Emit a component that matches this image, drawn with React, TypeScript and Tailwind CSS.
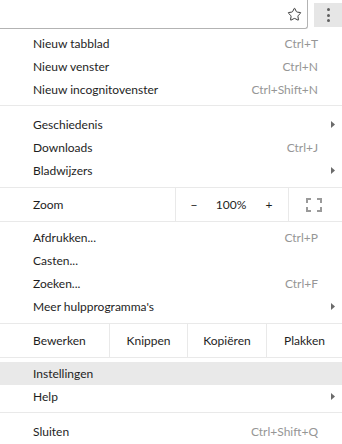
import { Star } from 'lucide-react';

type ItemProps = { label: string; shortcut?: string; arrow?: boolean; active?: boolean };

function Arrow() {
    return (
        <svg width="4" height="7" viewBox="0 0 4 7" className="block">
            <polygon points="0,0 4,3.5 0,7" fill="#6b6b6b" />
        </svg>
    );
}

function Item({ label, shortcut, arrow, active }: ItemProps) {
    return (
        <div className={`flex items-center h-[23px] pl-[33px] ${arrow ? 'pr-[7px]' : 'pr-[24px]'} ${active ? 'bg-[#e9e9e9]' : ''}`}>
            <span className="flex-1">{label}</span>
            {shortcut && <span className="text-[#969696]">{shortcut}</span>}
            {arrow && <Arrow />}
        </div>
    );
}

function Separator() {
    return <div className="h-px bg-[#e9e9e9]" />;
}

function FullscreenIcon() {
    return (
        <svg width="16" height="14" viewBox="0 0 16 14" fill="none" stroke="#9a9a9a" strokeWidth="2">
            <path d="M1 5V1h4M11 1h4v4M15 9v4h-4M5 13H1V9" />
        </svg>
    );
}

export default function App() {
    return (
        <div className="w-[342px] h-[444px] bg-white overflow-hidden text-[12px] text-[#1e1e1e] font-['Lato','Noto_Sans',sans-serif]">
            {/* toolbar */}
            <div className="flex h-[29px]">
                <div className="w-[308px] h-[29px] border-r border-b border-[#b3b3b3] rounded-br-[3px] flex items-center justify-end pr-[5px]">
                    <Star className="w-[15px] h-[15px] text-[#3c3c3c]" strokeWidth={1.6} />
                </div>
                <div className="ml-[6px] mt-[3px] w-[28px] h-[24px] bg-[#e6e6e6] flex flex-col items-center justify-center gap-[2.5px]">
                    <span className="w-[3px] h-[3px] rounded-full bg-[#5f5f5f]" />
                    <span className="w-[3px] h-[3px] rounded-full bg-[#5f5f5f]" />
                    <span className="w-[3px] h-[3px] rounded-full bg-[#5f5f5f]" />
                </div>
            </div>

            <div className="pt-[3px] pb-[4px]">
                <Item label="Nieuw tabblad" shortcut="Ctrl+T" />
                <Item label="Nieuw venster" shortcut="Ctrl+N" />
                <Item label="Nieuw incognitovenster" shortcut="Ctrl+Shift+N" />
            </div>
            <Separator />
            <div className="pt-[7px] pb-[5px]">
                <Item label="Geschiedenis" arrow />
                <Item label="Downloads" shortcut="Ctrl+J" />
                <Item label="Bladwijzers" arrow />
            </div>
            <Separator />
            <div className="flex h-[33px]">
                <div className="w-[175px] flex items-center pl-[33px]">Zoom</div>
                <div className="w-px bg-[#e9e9e9]" />
                <div className="w-[112px] flex items-center">
                    <span className="w-[36px] text-center">−</span>
                    <span className="w-[38px] text-center">100%</span>
                    <span className="w-[38px] text-center">+</span>
                </div>
                <div className="w-px bg-[#e9e9e9]" />
                <div className="flex-1 flex items-center justify-center pr-[3px]">
                    <FullscreenIcon />
                </div>
            </div>
            <Separator />
            <div className="pt-[4px] pb-[5px]">
                <Item label="Afdrukken..." shortcut="Ctrl+P" />
                <Item label="Casten..." />
                <Item label="Zoeken..." shortcut="Ctrl+F" />
                <Item label="Meer hulpprogramma's" arrow />
            </div>
            <Separator />
            <div className="flex h-[33px]">
                <div className="w-[109px] flex items-center pl-[33px]">Bewerken</div>
                <div className="w-px bg-[#e9e9e9]" />
                <div className="w-[77px] flex items-center justify-center">Knippen</div>
                <div className="w-px bg-[#e9e9e9]" />
                <div className="w-[78px] flex items-center justify-center">Kopiëren</div>
                <div className="w-px bg-[#e9e9e9]" />
                <div className="flex-1 flex items-center justify-center">Plakken</div>
            </div>
            <Separator />
            <div className="pt-[4px] pb-[4px]">
                <Item label="Instellingen" active />
                <Item label="Help" arrow />
            </div>
            <Separator />
            <div className="pt-[7px]">
                <Item label="Sluiten" shortcut="Ctrl+Shift+Q" />
            </div>
        </div>
    );
}
